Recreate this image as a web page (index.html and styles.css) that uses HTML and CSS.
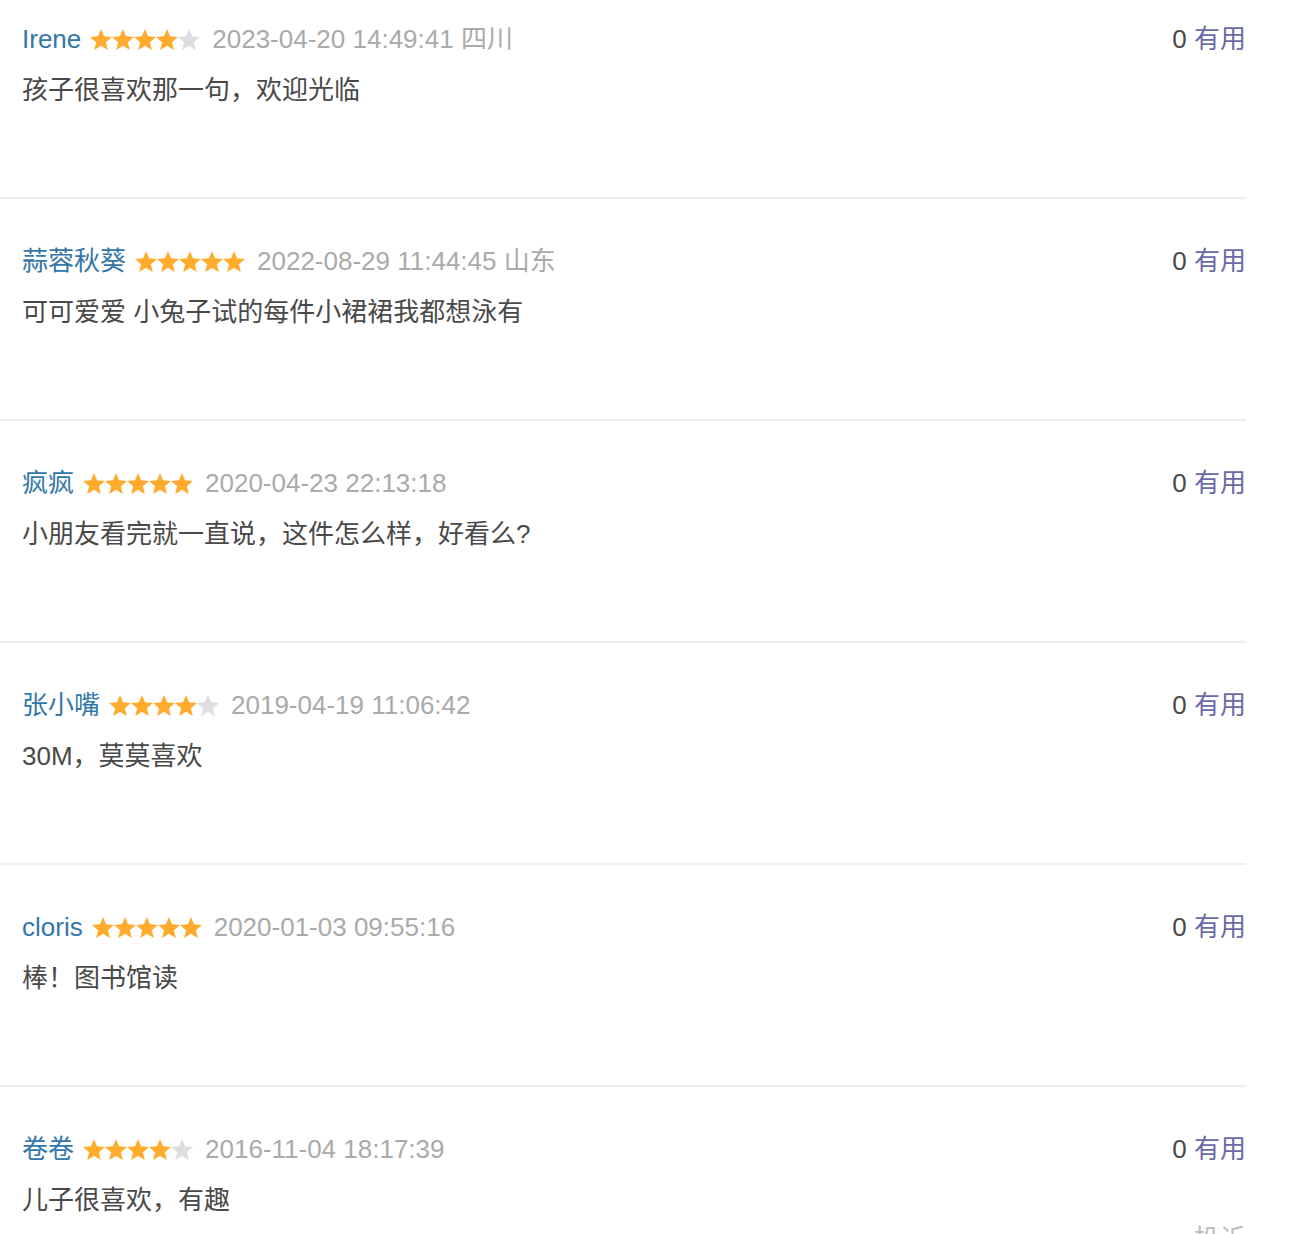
FILE: index.html
```html
<!DOCTYPE html>
<html lang="zh-CN">
<head>
    <meta charset="utf-8">
    <title>短评</title>
    <link rel="stylesheet" href="styles.css">
</head>
<body>
<svg width="0" height="0" class="defs">
    <symbol id="star" viewBox="0.8 1.2 22.4 21.4">
        <polygon points="12,1.2 15.1,8.6 23.2,9.3 17,14.6 18.9,22.6 12,18.3 5.1,22.6 7,14.6 0.8,9.3 8.9,8.6"/>
    </symbol>
</svg>
<div class="comments">

    <div class="comment">
        <div class="main">
            <div class="info">
                <a class="name">Irene</a>
                <span class="stars">
                    <svg class="on"><use href="#star"/></svg><svg class="on"><use href="#star"/></svg><svg class="on"><use href="#star"/></svg><svg class="on"><use href="#star"/></svg><svg class="off"><use href="#star"/></svg>
                </span>
                <span class="time">2023-04-20 14:49:41 四川</span>
            </div>
            <p class="text">孩子很喜欢那一句，欢迎光临</p>
        </div>
        <div class="votes">
            <div><span class="count">0</span> <a class="useful">有用</a></div>
        </div>
    </div>

    <div class="comment">
        <div class="main">
            <div class="info">
                <a class="name">蒜蓉秋葵</a>
                <span class="stars">
                    <svg class="on"><use href="#star"/></svg><svg class="on"><use href="#star"/></svg><svg class="on"><use href="#star"/></svg><svg class="on"><use href="#star"/></svg><svg class="on"><use href="#star"/></svg>
                </span>
                <span class="time">2022-08-29 11:44:45 山东</span>
            </div>
            <p class="text">可可爱爱 小兔子试的每件小裙裙我都想泳有</p>
        </div>
        <div class="votes">
            <div><span class="count">0</span> <a class="useful">有用</a></div>
        </div>
    </div>

    <div class="comment">
        <div class="main">
            <div class="info">
                <a class="name">疯疯</a>
                <span class="stars">
                    <svg class="on"><use href="#star"/></svg><svg class="on"><use href="#star"/></svg><svg class="on"><use href="#star"/></svg><svg class="on"><use href="#star"/></svg><svg class="on"><use href="#star"/></svg>
                </span>
                <span class="time">2020-04-23 22:13:18</span>
            </div>
            <p class="text">小朋友看完就一直说，这件怎么样，好看么?</p>
        </div>
        <div class="votes">
            <div><span class="count">0</span> <a class="useful">有用</a></div>
        </div>
    </div>

    <div class="comment">
        <div class="main">
            <div class="info">
                <a class="name">张小嘴</a>
                <span class="stars">
                    <svg class="on"><use href="#star"/></svg><svg class="on"><use href="#star"/></svg><svg class="on"><use href="#star"/></svg><svg class="on"><use href="#star"/></svg><svg class="off"><use href="#star"/></svg>
                </span>
                <span class="time">2019-04-19 11:06:42</span>
            </div>
            <p class="text">30M，莫莫喜欢</p>
        </div>
        <div class="votes">
            <div><span class="count">0</span> <a class="useful">有用</a></div>
        </div>
    </div>

    <div class="comment">
        <div class="main">
            <div class="info">
                <a class="name">cloris</a>
                <span class="stars">
                    <svg class="on"><use href="#star"/></svg><svg class="on"><use href="#star"/></svg><svg class="on"><use href="#star"/></svg><svg class="on"><use href="#star"/></svg><svg class="on"><use href="#star"/></svg>
                </span>
                <span class="time">2020-01-03 09:55:16</span>
            </div>
            <p class="text">棒！图书馆读</p>
        </div>
        <div class="votes">
            <div><span class="count">0</span> <a class="useful">有用</a></div>
        </div>
    </div>

    <div class="comment">
        <div class="main">
            <div class="info">
                <a class="name">卷卷</a>
                <span class="stars">
                    <svg class="on"><use href="#star"/></svg><svg class="on"><use href="#star"/></svg><svg class="on"><use href="#star"/></svg><svg class="on"><use href="#star"/></svg><svg class="off"><use href="#star"/></svg>
                </span>
                <span class="time">2016-11-04 18:17:39</span>
            </div>
            <p class="text">儿子很喜欢，有趣</p>
        </div>
        <div class="votes">
            <div><span class="count">0</span> <a class="useful">有用</a></div>
            <a class="report">投诉</a>
        </div>
    </div>

</div>
</body>
</html>
```

FILE: styles.css
```css
body {
    margin: 0;
    background: #fff;
    font-family: "Liberation Sans", "Noto Sans CJK SC", sans-serif;
    font-size: 26px;
    color: #494949;
}
.defs {
    position: absolute;
}
.comments {
    width: 1246px;
}
.comment {
    display: flex;
    justify-content: space-between;
    height: 222px;
    box-sizing: border-box;
    padding: 44px 0 0 22px;
    border-bottom: 2px solid #eee;
}
.comment:first-child {
    height: 199px;
    padding-top: 21px;
}
.info {
    display: flex;
    align-items: center;
    height: 36px;
    line-height: 36px;
}
.name {
    color: #3377aa;
}
.stars {
    display: flex;
    margin: 0 12px 0 9px;
}
.stars svg {
    width: 22px;
    height: 21px;
}
.stars .on {
    fill: #ffac2d;
}
.stars .off {
    fill: #dedede;
}
.time {
    color: #aaa;
}
.text {
    margin: 15px 0 0;
    line-height: 36px;
}
.votes {
    display: flex;
    flex-direction: column;
    align-items: flex-end;
    line-height: 36px;
}
.count {
    color: #494949;
}
.useful {
    color: #6a6aa6;
}
.report {
    margin-top: 54px;
    color: #bbb;
}
```
